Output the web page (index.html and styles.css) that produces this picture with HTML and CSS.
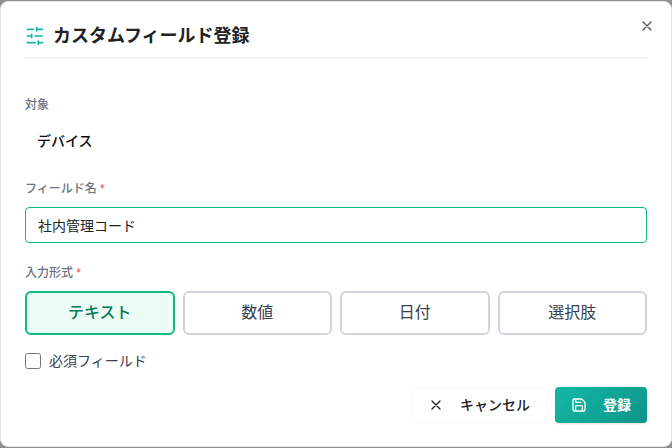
FILE: index.html
```html
<!DOCTYPE html>
<html lang="ja">
<head>
<meta charset="utf-8">
<meta name="viewport" content="width=device-width, initial-scale=1">
<title>カスタムフィールド登録</title>
<link rel="stylesheet" href="styles.css">
</head>
<body>
<main class="dialog" role="dialog" aria-labelledby="dialog-title">
  <header class="dialog-header">
    <svg class="icon icon-title" viewBox="0 0 24 24" aria-hidden="true"><path d="M21 4h-7M10 4H3M21 12h-9M8 12H3M21 20h-5M12 20H3M14 2v4M8 10v4M16 18v4"/></svg>
    <h1 class="title" id="dialog-title">カスタムフィールド登録</h1>
  </header>
  <button class="close" type="button" aria-label="閉じる">
    <svg class="icon icon-small" viewBox="0 0 24 24" aria-hidden="true"><path d="M18 6 6 18M6 6l12 12"/></svg>
  </button>
  <form class="form">
    <div class="field">
      <span class="label">対象</span>
      <p class="static-value">デバイス</p>
    </div>
    <div class="field">
      <label class="label" for="field-name">フィールド名 <span class="required">*</span></label>
      <input class="text-input" id="field-name" type="text" value="社内管理コード" required>
    </div>
    <div class="field" role="group" aria-labelledby="format-label">
      <span class="label" id="format-label">入力形式 <span class="required">*</span></span>
      <div class="options">
        <button class="option option-selected" type="button" aria-pressed="true">テキスト</button>
        <button class="option" type="button" aria-pressed="false">数値</button>
        <button class="option" type="button" aria-pressed="false">日付</button>
        <button class="option" type="button" aria-pressed="false">選択肢</button>
      </div>
    </div>
    <div class="check-row">
      <input class="checkbox" id="is-required" type="checkbox">
      <label class="check-label" for="is-required">必須フィールド</label>
    </div>
    <footer class="actions">
      <button class="button button-cancel" type="button">
        <svg class="icon icon-small" viewBox="0 0 24 24" aria-hidden="true"><path d="M18 6 6 18M6 6l12 12"/></svg>
        キャンセル
      </button>
      <button class="button button-submit" type="submit">
        <svg class="icon icon-small" viewBox="0 0 24 24" aria-hidden="true"><path d="M15.2 3a2 2 0 0 1 1.4.6l3.8 3.8a2 2 0 0 1 .6 1.4V19a2 2 0 0 1-2 2H5a2 2 0 0 1-2-2V5a2 2 0 0 1 2-2z"/><path d="M17 21v-7a1 1 0 0 0-1-1H8a1 1 0 0 0-1 1v7M7 3v4a1 1 0 0 0 1 1h7"/></svg>
        登録
      </button>
    </footer>
  </form>
</main>
</body>
</html>
```
FILE: styles.css
```css
* {
  box-sizing: border-box;
}

body {
  margin: 0;
  min-height: 100vh;
  padding: 1px 0;
  display: flex;
  flex-direction: column;
  background: #8f8f8f;
  font-family: "Liberation Sans", "Noto Sans CJK JP", sans-serif;
  font-size: 14px;
  line-height: 20px;
  color: #0a0a0a;
}

button,
input {
  margin: 0;
  font: inherit;
}

button {
  cursor: pointer;
}

.dialog {
  position: relative;
  flex: 1;
  padding: 24px 24px 20px;
  border: 1px solid #e5e5e5;
  border-radius: 8px;
  background: #fff;
}

.icon {
  flex: none;
  fill: none;
  stroke: currentColor;
  stroke-width: 2;
  stroke-linecap: round;
  stroke-linejoin: round;
}

.icon-small {
  width: 16px;
  height: 16px;
}

.icon-title {
  width: 20px;
  height: 20px;
  color: #14b8a6;
}

.dialog-header {
  display: flex;
  align-items: center;
  gap: 8px;
  padding-bottom: 11px;
  border-bottom: 2px solid #f3f3f3;
}

.title {
  margin: 0;
  font-size: 18px;
  line-height: 20px;
  font-weight: 700;
  color: #222;
}

.close {
  position: absolute;
  top: 16px;
  right: 16px;
  display: flex;
  padding: 0;
  border: 0;
  background: none;
  color: #555;
}

.form {
  display: flex;
  flex-direction: column;
  gap: 16px;
  padding-top: 36px;
}

.field {
  display: flex;
  flex-direction: column;
  gap: 8px;
}

.field + .field {
  margin-top: 4px;
}

.label {
  font-size: 12px;
  line-height: 20px;
  font-weight: 500;
  color: #6b7280;
}

.required {
  color: #ef4444;
}

.static-value {
  margin: 0;
  padding: 8px 12px;
  font-weight: 500;
}

.text-input {
  width: 100%;
  height: 36px;
  padding: 0 12px;
  border: 1px solid #10b981;
  border-radius: 4px;
  outline: none;
  background: #fff;
  color: #222;
}

.options {
  display: grid;
  grid-template-columns: repeat(4, 1fr);
  gap: 8px;
}

.option {
  height: 44px;
  padding: 0;
  border: 2px solid #d1d5db;
  border-radius: 6px;
  background: #fff;
  font-size: 16px;
  color: #374151;
}

.option-selected {
  border-color: #10b981;
  background: #ecfdf5;
  font-weight: 500;
  color: #047857;
}

.check-row {
  display: flex;
  align-items: center;
  gap: 8px;
}

.checkbox {
  width: 16px;
  height: 16px;
}

.check-label {
  color: #374151;
}

.actions {
  display: flex;
  justify-content: flex-end;
  gap: 8px;
}

.button {
  display: flex;
  align-items: center;
  gap: 16px;
  height: 36px;
  padding: 0 16px;
  border: 0;
  border-radius: 4px;
  font-weight: 500;
}

.button-cancel {
  border: 1px solid #f8f8f8;
  background: #fff;
  color: #222;
}

.button-submit {
  background: linear-gradient(135deg, #14b8a6, #0d9488);
  box-shadow: 0 1px 2px rgba(0, 0, 0, 0.12);
  font-weight: 700;
  color: #fff;
}
```
